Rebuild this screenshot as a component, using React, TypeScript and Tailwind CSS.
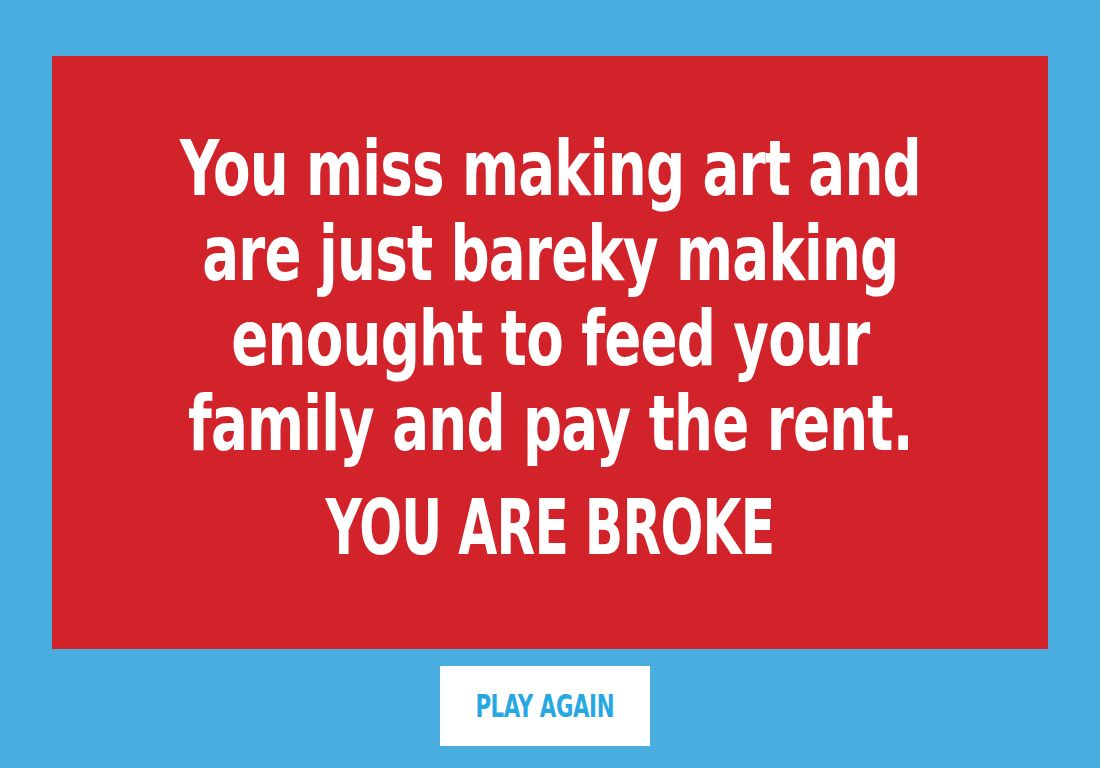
import React from "react";

const lines = [
  "You miss making art and",
  "are just bareky making",
  "enought to feed your",
  "family and pay the rent.",
];

export default function App() {
  return (
    <div className="w-[1100px] h-[768px] bg-[#4aaddf] pt-[56px] px-[52px] flex flex-col">
      <div className="h-[593px] pb-[9px] bg-[#d2232a] flex flex-col items-center justify-center text-white text-center font-['Impact','DejaVu_Sans_Condensed',sans-serif] font-bold">
        <div className="scale-x-[0.8] text-[76px] leading-[85px] tracking-[-1px] whitespace-nowrap">
          {lines.map((l) => (
            <div key={l}>{l}</div>
          ))}
          <div className="mt-[19px]">
            <span className="inline-block scale-x-[0.92]">YOU ARE BROKE</span>
          </div>
        </div>
      </div>
      <div className="flex justify-center pr-[10px] mt-[17px]">
        <button className="w-[210px] h-[80px] bg-white text-[#27a8e1] font-['Impact','DejaVu_Sans_Condensed',sans-serif] font-bold">
          <span className="inline-block scale-x-[0.74] text-[32px] tracking-[-0.5px] whitespace-nowrap">PLAY AGAIN</span>
        </button>
      </div>
    </div>
  );
}
